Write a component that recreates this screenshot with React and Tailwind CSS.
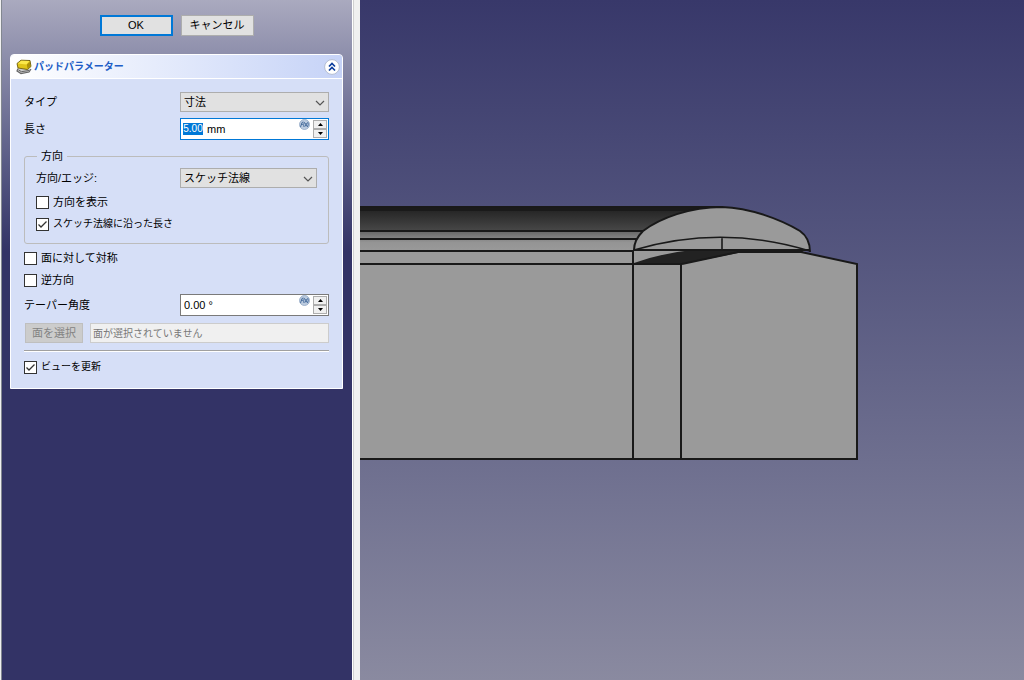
import { useId } from "react";

const buttonBase = "h-[21px] w-[73px] bg-[#e1e1e1] text-[11px] leading-none text-black";

function PadIcon() {
  return (
    <svg width="16" height="16" viewBox="0 0 16 16" aria-hidden="true">
      <path d="M2 9.500 L1 12 L5 14.500 L13 13 L15 10" fill="#ccc" stroke="#666" strokeWidth="1.200" />
      <path d="M2.500 11 L5.500 12.700 L13 11.500" fill="none" stroke="#555" strokeWidth="0.900" />
      <path d="M1 4.500 L5 1.200 L14 1.500 L15 7.500 L11.500 10.500 L2 9Z" fill="#e0c418" stroke="#6b5a08" strokeWidth="0.900" />
      <path d="M1.800 4.500 L5.300 1.800 L13.500 2.100 L10.500 5.400Z" fill="#fbe84a" />
      <path d="M10.900 5.600 L13.700 2.700 L14.400 7.200 L11.400 9.800Z" fill="#ad920a" />
    </svg>
  );
}

function CollapseIcon() {
  return (
    <svg width="16" height="16" viewBox="0 0 16 16" aria-hidden="true">
      <circle cx="8" cy="8" r="7.4" fill="#fff" stroke="#b3bdd2" />
      <path d="M5 7.5 L8 4.5 L11 7.5 M5 11.5 L8 8.5 L11 11.5" fill="none" stroke="#0b3c9c" strokeWidth="1.7" />
    </svg>
  );
}

function ExpressionIcon() {
  return (
    <svg width="11" height="11" viewBox="0 0 11 11" aria-hidden="true">
      <circle cx="5.5" cy="5.5" r="5" fill="#bccbdf" stroke="#8fa6c4" strokeWidth="0.8" />
      <path
        d="M1.5 8 L3 3.5 L4.5 3 M2 5.3 H4 M5.5 3 Q4 5.5 5 8 M6 4 L8 7.5 M8 4 L6 7.5 M8.7 3 Q10 5.5 8.4 8"
        fill="none"
        stroke="#3f6698"
        strokeWidth="0.9"
      />
    </svg>
  );
}

function Field({ label, htmlFor, children }) {
  return (
    <div className="flex items-center justify-between">
      <label htmlFor={htmlFor} className="whitespace-nowrap">
        {label}
      </label>
      {children}
    </div>
  );
}

function Select({ id, options, className }) {
  return (
    <div className={`relative ${className}`}>
      <select
        id={id}
        className="block h-5 w-full appearance-none border border-[#adadad] bg-[#e1e1e1] pl-[3px] text-[11px] leading-[18px]"
      >
        {options.map((option) => (
          <option key={option}>{option}</option>
        ))}
      </select>
      <svg className="pointer-events-none absolute top-2 right-1" width="10" height="6" viewBox="0 0 10 6">
        <path d="M1 1 L5 5 L9 1" fill="none" stroke="#555" strokeWidth="1.2" />
      </svg>
    </div>
  );
}

function Spinner({ id, value, unit, active }) {
  return (
    <div
      className={`flex h-[22px] w-[149px] border bg-white pr-px ${
        active ? "border-[#0078d7]" : "border-[#7a7a7a]"
      }`}
    >
      {active ? (
        <div className="flex min-w-0 flex-1 items-center pl-0.5">
          <input
            id={id}
            defaultValue={value}
            className="h-3 w-5 bg-[#0078d7] text-center text-[10px] text-white outline-none"
          />
          <span className="pl-1 text-[11px]">{unit}</span>
        </div>
      ) : (
        <input
          id={id}
          defaultValue={`${value} ${unit}`}
          className="min-w-0 flex-1 pl-[3px] text-[11px] outline-none"
        />
      )}
      <span className="pr-[3px]">
        <ExpressionIcon />
      </span>
      <div className="flex w-[14px] flex-col py-px">
        <button
          type="button"
          aria-label="+"
          className="flex flex-1 items-center justify-center border border-[#adadad] bg-[#f0f0f0]"
        >
          <svg width="5" height="3" viewBox="0 0 5 3">
            <path d="M0 3 L2.5 0 L5 3Z" />
          </svg>
        </button>
        <button
          type="button"
          aria-label="-"
          className="flex flex-1 items-center justify-center border border-[#adadad] bg-[#f0f0f0]"
        >
          <svg width="5" height="3" viewBox="0 0 5 3">
            <path d="M0 0 L2.5 3 L5 0Z" />
          </svg>
        </button>
      </div>
    </div>
  );
}

function Checkbox({ label, checked, small }) {
  const id = useId();
  return (
    <div className="flex h-[22px] items-center gap-1">
      <span className="relative flex">
        <input
          id={id}
          type="checkbox"
          defaultChecked={checked}
          className="peer size-[13px] appearance-none border border-[#333] bg-white"
        />
        <svg
          className="pointer-events-none absolute inset-0 hidden peer-checked:block"
          width="13"
          height="13"
          viewBox="0 0 13 13"
        >
          <path d="M2.5 6.5 L5 9 L10.5 3.5" fill="none" stroke="#333" strokeWidth="1.3" />
        </svg>
      </span>
      <label htmlFor={id} className={`whitespace-nowrap ${small ? "text-[10px]" : "text-[11px]"}`}>
        {label}
      </label>
    </div>
  );
}

function TaskPanel() {
  return (
    <section className="rounded-t-[4px] border border-white bg-[#d6dff7] text-[11px] leading-4">
      <header className="flex h-6 items-center gap-0.5 rounded-t-[3px] border-b border-white bg-linear-to-r from-white to-[#c6d3f7] pr-0.5 pl-[5px]">
        <PadIcon />
        <h1 className="flex-1 text-[10px] font-bold text-[#215dc6]">パッドパラメーター</h1>
        <button type="button" aria-label="折りたたむ">
          <CollapseIcon />
        </button>
      </header>

      <div className="px-[13px] pt-[13px] pb-[10px]">
        <div className="flex flex-col gap-[6px]">
          <Field label="タイプ" htmlFor="type">
            <Select id="type" options={["寸法"]} className="w-[149px]" />
          </Field>
          <Field label="長さ" htmlFor="length">
            <Spinner id="length" value="5.00" unit="mm" active />
          </Field>
        </div>

        <fieldset className="mt-2 rounded-[3px] border border-[#bcbcbc] px-[11px] pb-2">
          <legend className="ml-px px-1">方向</legend>
          <div className="pt-1 pb-[3px]">
            <Field label="方向/エッジ:" htmlFor="edge">
              <Select id="edge" options={["スケッチ法線"]} className="w-[137px]" />
            </Field>
          </div>
          <Checkbox label="方向を表示" />
          <Checkbox label="スケッチ法線に沿った長さ" checked small />
        </fieldset>

        <div className="py-[3px]">
          <Checkbox label="面に対して対称" />
          <Checkbox label="逆方向" />
        </div>
        <Field label="テーパー角度" htmlFor="taper">
          <Spinner id="taper" value="0.00" unit="°" />
        </Field>
        <div className="mt-[7px] flex gap-[7px] pl-px">
          <button
            type="button"
            disabled
            className="h-5 w-[58px] border border-[#bfbfbf] bg-[#cccccc] text-[11px] leading-none text-[#838383]"
          >
            面を選択
          </button>
          <input
            disabled
            aria-label="面"
            placeholder="面が選択されていません"
            className="h-5 min-w-0 flex-1 border border-[#ccc] bg-[#f0f0f0] pl-0.5 text-[10px] placeholder:text-[#787878]"
          />
        </div>
        <hr className="mt-[7px] mb-1 h-0.5 border-t border-b border-t-[#a0a0a0] border-b-white" />
        <Checkbox label="ビューを更新" checked small />
      </div>
    </section>
  );
}

function Viewport() {
  return (
    <main className="min-w-0 flex-1 overflow-hidden bg-linear-to-b from-[#38386a] to-[#8a8aa0]">
      <svg width="664" height="680" viewBox="360 0 664 680" role="img" aria-label="3D">
        <defs>
          <linearGradient id="upper" x1="0" y1="0" x2="0" y2="1">
            <stop offset="0" stopColor="#202020" />
            <stop offset="1" stopColor="#484848" />
          </linearGradient>
          <linearGradient id="lower" x1="0" y1="0" x2="0" y2="1">
            <stop offset="0" stopColor="#666" />
            <stop offset="0.6" stopColor="#949494" />
            <stop offset="1" stopColor="#999" />
          </linearGradient>
        </defs>
        <path d="M360 207 H722 L660 225 L642 231 H360Z" fill="url(#upper)" />
        <path d="M360 207 H705 L690 211 H360Z" fill="#1a1a1a" />
        <path d="M360 231 H643 L634 250 H360Z" fill="url(#lower)" />
        <path d="M360 250 H810 L801 252 L857 264 V459 H360Z" fill="#9a9a9a" />
        <path d="M634 250 C634 242 637 237 643 231 C660 218 690 207 722 207 C750 208 780 219 800 231 Q810 238 810 251Z" fill="#9a9a9a" />
        <path d="M634 263 Q662 253 692 250 H805 L801 253 H738 L682 264Z" fill="#222" />
        <g fill="none" stroke="#191919" strokeWidth="2">
          <path d="M360 207 H722 M360 231 H643 M360 239 H637 M360 251 H634 M360 264 H682" />
          <path d="M634 250 C634 242 637 237 643 231 C660 218 690 207 722 207 C750 208 780 219 800 231 Q810 238 810 252" />
          <path d="M634 250 H810" />
          <path d="M634 250 Q722 224 810 251 M722 237 V250" strokeWidth="1.6" />
          <path d="M633 250 V459 M681 264 V459 M682 264 L738 252 H801 L857 264 V459 H360" />
        </g>
      </svg>
    </main>
  );
}

export default function App() {
  return (
    <div className="flex h-screen overflow-hidden bg-[#f0f0f0] pl-px font-['Liberation_Sans','Noto_Sans_CJK_JP',sans-serif] text-black">
      <aside className="w-[352px] shrink-0 border-r border-l border-r-white border-l-[#828790] bg-linear-to-b from-[#aaaabf] via-[#333366] via-37% to-[#333366] pt-[15px] pr-[9px] pl-2">
        <div className="mb-[18px] flex justify-center gap-2">
          <button type="button" className={`${buttonBase} border-2 border-[#0078d7]`}>
            OK
          </button>
          <button type="button" className={`${buttonBase} border border-[#adadad]`}>
            キャンセル
          </button>
        </div>
        <TaskPanel />
      </aside>
      <div className="w-[7px] shrink-0 border-l border-[#d0d0d0]" />
      <Viewport />
    </div>
  );
}
